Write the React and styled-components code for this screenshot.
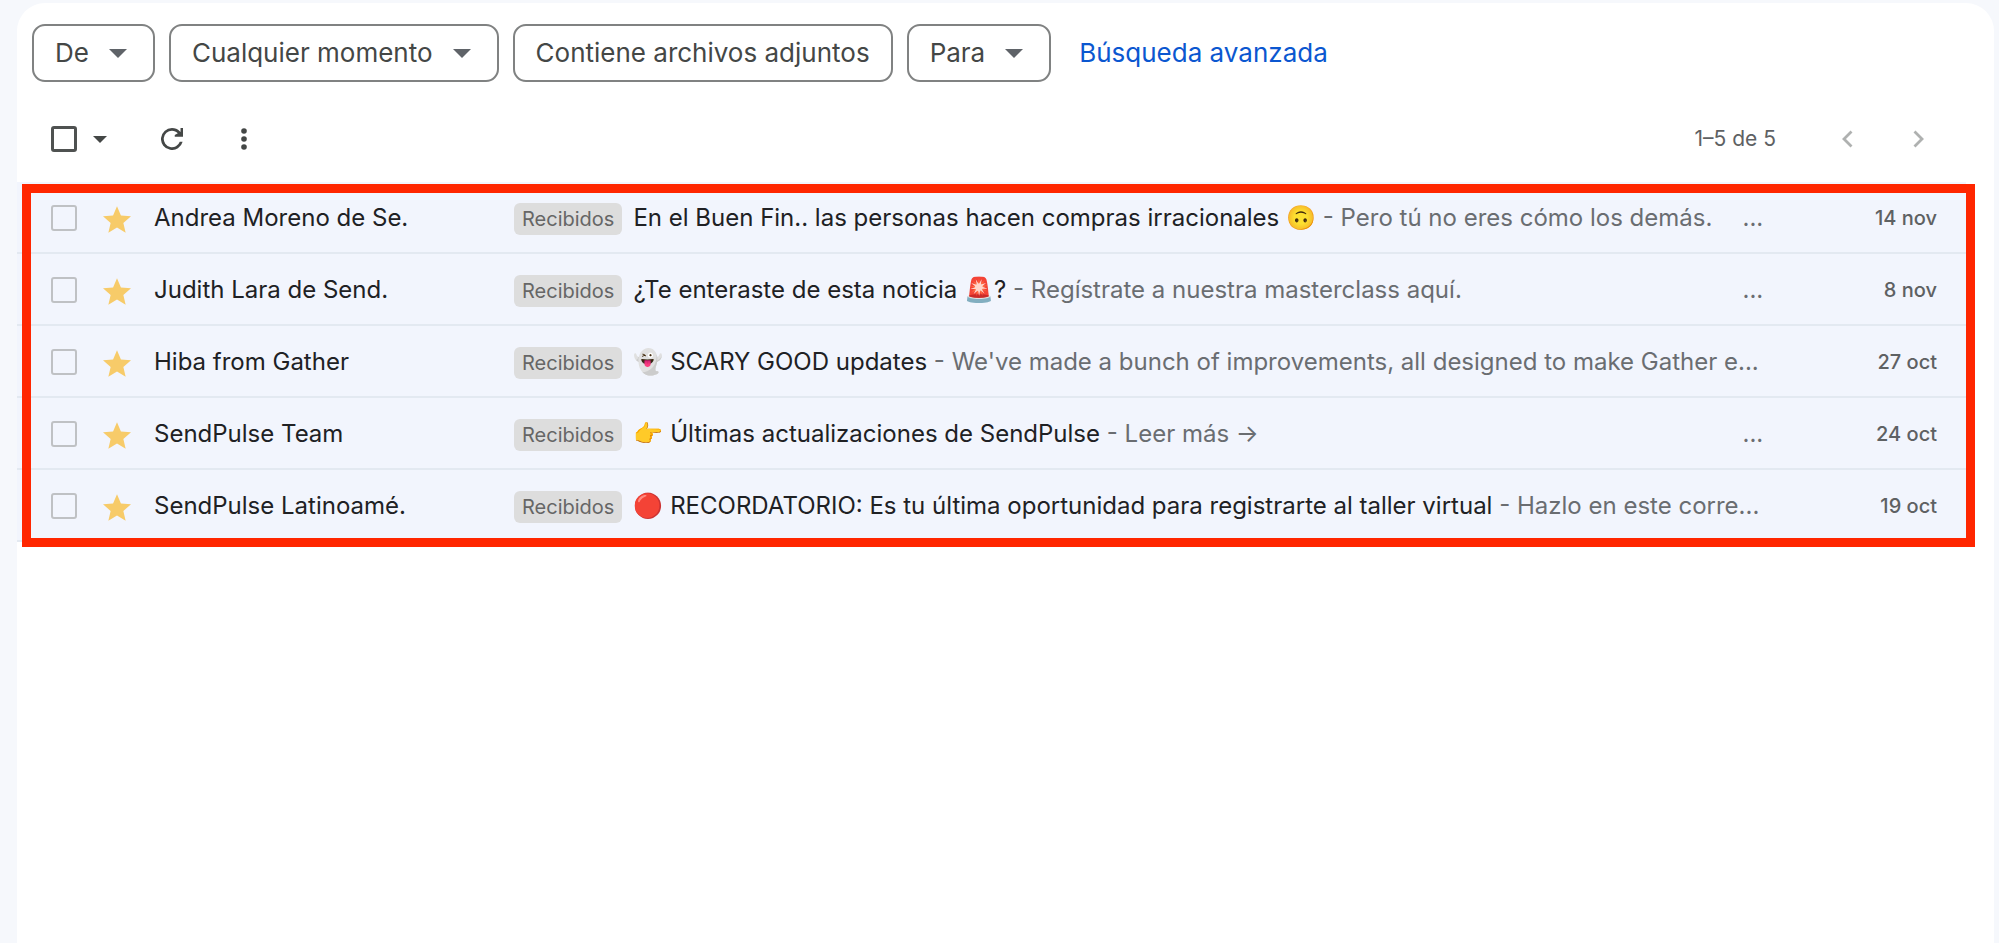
import React from "react";
import styled, { createGlobalStyle } from "styled-components";

const GlobalStyle = createGlobalStyle`
  * { box-sizing: border-box; }
  body {
    margin: 0;
    background: #f6f8fc;
    color: #202124;
    font-family: Inter, "Liberation Sans", sans-serif;
  }
`;

const Panel = styled.main`
  min-height: calc(100vh - 3px);
  margin: 3px 5px 0 17px;
  border-radius: 28px 28px 0 0;
  background: #fff;
`;

const FilterBar = styled.div`
  display: flex;
  align-items: center;
  gap: 14px;
  padding: 21px 15px 0;
`;

const Chip = styled.button`
  display: flex;
  align-items: center;
  gap: 20px;
  height: 58px;
  padding: 0 ${(p) => (p.$menu ? 26 : 21)}px 0 21px;
  border: 2px solid #808282;
  border-radius: 13px;
  background: #fff;
  color: #444746;
  font-family: inherit;
  font-size: 26px;
  line-height: 32px;
  white-space: nowrap;
  cursor: pointer;
`;

const AdvancedLink = styled.a`
  margin-left: 14px;
  color: #0b57d0;
  font-size: 26px;
  line-height: 32px;
  white-space: nowrap;
  text-decoration: none;
`;

const Toolbar = styled.div`
  display: flex;
  align-items: center;
  justify-content: space-between;
  height: 100px;
  padding: 14px 39px 0 34px;
`;

const Tools = styled.div`
  display: flex;
  align-items: center;
`;

const Checkbox = styled.input.attrs({ type: "checkbox" })`
  appearance: none;
  flex: none;
  width: 26px;
  height: 26px;
  margin: 0;
  border: ${(p) => (p.$strong ? "3px solid #4f5251" : "2px solid #bfc1c4")};
  border-radius: 3px;
  background: transparent;
`;

const IconButton = styled.button`
  display: grid;
  place-items: center;
  width: ${(p) => p.$width || 72}px;
  height: 48px;
  padding: 0;
  border: 0;
  background: none;
  color: ${(p) => (p.disabled ? "#afb1b0" : "#444746")};
`;

const RefreshButton = styled(IconButton)`
  margin-left: 13px;
`;

const PageCount = styled.span`
  margin-right: 35px;
  color: #5e6163;
  font-size: 21px;
  line-height: 28px;
`;

const ListArea = styled.section`
  position: relative;
  margin-right: 28px;
`;

const MailList = styled.ul`
  margin: 0;
  padding: 0;
  list-style: none;
`;

const MailRow = styled.li`
  display: flex;
  align-items: center;
  height: 72px;
  padding: 2px 29px 0 34px;
  border-bottom: 2px solid #e3e9f1;
  background: #f2f5fd;
`;

const StarButton = styled.button`
  display: flex;
  flex: none;
  margin: 2px 23px 0 26px;
  padding: 0;
  border: 0;
  background: none;
`;

const Sender = styled.span`
  flex: 0 0 360px;
  font-size: 24px;
  line-height: 32px;
  white-space: nowrap;
`;

const Label = styled.span`
  flex: none;
  margin-top: 2px;
  padding: 0 8px;
  border-radius: 6px;
  background: #ddd;
  color: #666;
  font-size: 20px;
  line-height: 32px;
`;

const Message = styled.a`
  display: flex;
  flex: 1;
  min-width: 0;
  margin-left: 11px;
  overflow: hidden;
  color: #202124;
  font-size: 24px;
  line-height: 32px;
  white-space: nowrap;
  text-decoration: none;
`;

const Snippet = styled.span`
  color: #6a6d71;
  white-space: pre;
`;

const Overflow = styled(Snippet)`
  margin-left: auto;
`;

const DateText = styled.time`
  flex: 0 0 167px;
  color: #5e6163;
  font-size: 20px;
  font-weight: 500;
  line-height: 32px;
  text-align: right;
`;

const Highlight = styled.div`
  position: absolute;
  inset: 2px -9px -5px 5px;
  border: 9px solid #ff2600;
  pointer-events: none;
`;

const Caret = ({ width = 18, height = 9, color = "#5f6368" }) => (
  <svg width={width} height={height} viewBox="0 0 18 9" preserveAspectRatio="none" fill={color} aria-hidden="true">
    <path d="M0 0h18L9 9z" />
  </svg>
);

const Refresh = () => (
  <svg width="22" height="22" viewBox="4 4 16 16" fill="currentColor" aria-hidden="true">
    <path d="M17.65 6.35A7.96 7.96 0 0 0 12 4a8 8 0 1 0 7.73 10h-2.08A6 6 0 1 1 12 6c1.66 0 3.14.69 4.22 1.78L14 9v1.4H20V4h-1.8v2.9z" />
  </svg>
);

const Dots = () => (
  <svg width="6" height="22" viewBox="0 0 6 22" fill="currentColor" aria-hidden="true">
    <circle cx="3" cy="3" r="2.8" />
    <circle cx="3" cy="11" r="2.8" />
    <circle cx="3" cy="19" r="2.8" />
  </svg>
);

const Chevron = ({ right }) => (
  <svg width="12" height="18" viewBox="0 0 12 18" fill="none" stroke="currentColor" strokeWidth="2.8" aria-hidden="true">
    <path d={right ? "M1.5 1.5 9 9l-7.5 7.5" : "M10.5 1.5 3 9l7.5 7.5"} />
  </svg>
);

const Star = () => (
  <svg width="28" height="27" viewBox="2 2 20 19" fill="#f7cb69" aria-hidden="true">
    <path d="M12 17.27 18.18 21l-1.64-7.03L22 9.24l-7.19-.61L12 2 9.19 8.63 2 9.24l5.46 4.73L5.82 21z" />
  </svg>
);

const filters = [
  { text: "De", menu: true },
  { text: "Cualquier momento", menu: true },
  { text: "Contiene archivos adjuntos", menu: false },
  { text: "Para", menu: true },
];

const mails = [
  {
    sender: "Andrea Moreno de Se.",
    subject: "En el Buen Fin.. las personas hacen compras irracionales 🙃",
    snippet: "Pero tú no eres cómo los demás.",
    more: true,
    date: "14 nov",
  },
  {
    sender: "Judith Lara de Send.",
    subject: "¿Te enteraste de esta noticia 🚨?",
    snippet: "Regístrate a nuestra masterclass aquí.",
    more: true,
    date: "8 nov",
  },
  {
    sender: "Hiba from Gather",
    subject: "👻 SCARY GOOD updates",
    snippet: "We've made a bunch of improvements, all designed to make Gather e...",
    date: "27 oct",
  },
  {
    sender: "SendPulse Team",
    subject: "👉 Últimas actualizaciones de SendPulse",
    snippet: "Leer más →",
    more: true,
    date: "24 oct",
  },
  {
    sender: "SendPulse Latinoamé.",
    subject: "🔴 RECORDATORIO: Es tu última oportunidad para registrarte al taller virtual",
    snippet: "Hazlo en este corre...",
    date: "19 oct",
  },
];

export default function App() {
  return (
    <>
      <GlobalStyle />
      <Panel>
        <FilterBar>
          {filters.map((f) => (
            <Chip key={f.text} type="button" $menu={f.menu} aria-haspopup={f.menu ? "menu" : undefined}>
              {f.text}
              {f.menu && <Caret />}
            </Chip>
          ))}
          <AdvancedLink href="#avanzada">Búsqueda avanzada</AdvancedLink>
        </FilterBar>
        <Toolbar>
          <Tools>
            <Checkbox $strong aria-label="Seleccionar todo" />
            <IconButton type="button" $width={46} aria-label="Opciones de selección">
              <Caret width={14} height={7} color="#444746" />
            </IconButton>
            <RefreshButton type="button" aria-label="Actualizar">
              <Refresh />
            </RefreshButton>
            <IconButton type="button" aria-label="Más">
              <Dots />
            </IconButton>
          </Tools>
          <Tools>
            <PageCount>1–5 de 5</PageCount>
            <IconButton type="button" disabled aria-label="Más recientes">
              <Chevron />
            </IconButton>
            <IconButton type="button" disabled aria-label="Más antiguos">
              <Chevron right />
            </IconButton>
          </Tools>
        </Toolbar>
        <ListArea>
          <MailList>
            {mails.map((m) => (
              <MailRow key={m.sender}>
                <Checkbox aria-label={`Seleccionar ${m.sender}`} />
                <StarButton type="button" aria-label="Destacado">
                  <Star />
                </StarButton>
                <Sender>{m.sender}</Sender>
                <Label>Recibidos</Label>
                <Message href="#mensaje">
                  <span>{m.subject}</span>
                  <Snippet>{` - ${m.snippet}`}</Snippet>
                  {m.more && <Overflow>... </Overflow>}
                </Message>
                <DateText>{m.date}</DateText>
              </MailRow>
            ))}
          </MailList>
          <Highlight />
        </ListArea>
      </Panel>
    </>
  );
}
